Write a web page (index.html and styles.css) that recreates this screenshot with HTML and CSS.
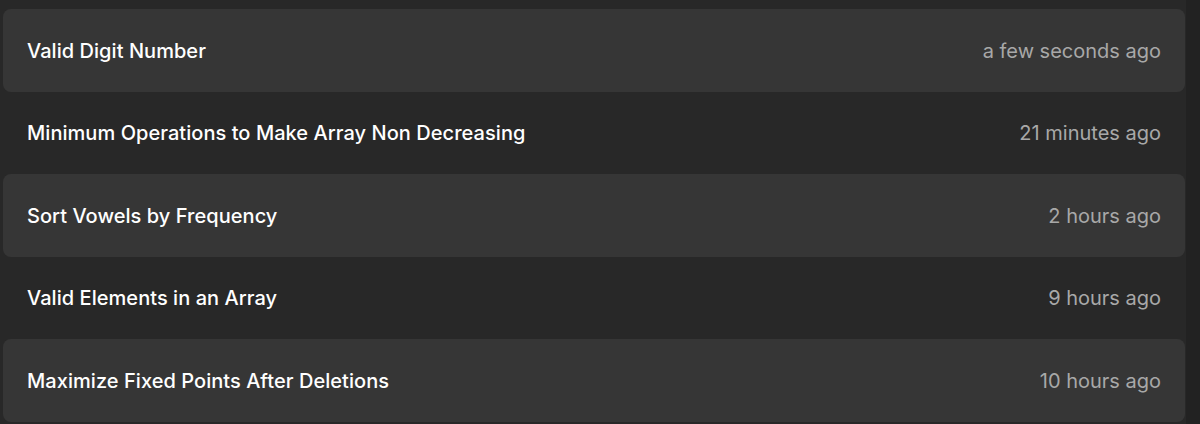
FILE: index.html
```html
<!DOCTYPE html>
<html lang="en">

<head>
    <meta charset="UTF-8">
    <meta name="viewport" content="width=device-width, initial-scale=1.0">
    <title>Recent</title>
    <link rel="stylesheet" href="styles.css">
</head>

<body>
    <div class="page">
        <ul class="recent-list">
            <li class="recent-item">
                <span class="title">Valid Digit Number</span>
                <span class="time">a few seconds ago</span>
            </li>
            <li class="recent-item">
                <span class="title">Minimum Operations to Make Array Non Decreasing</span>
                <span class="time">21 minutes ago</span>
            </li>
            <li class="recent-item">
                <span class="title">Sort Vowels by Frequency</span>
                <span class="time">2 hours ago</span>
            </li>
            <li class="recent-item">
                <span class="title">Valid Elements in an Array</span>
                <span class="time">9 hours ago</span>
            </li>
            <li class="recent-item">
                <span class="title">Maximize Fixed Points After Deletions</span>
                <span class="time">10 hours ago</span>
            </li>
        </ul>
        <div class="scroll-track"></div>
    </div>
</body>

</html>
```

FILE: styles.css
```css
body {
    margin: 0;
    padding: 0;
    background-color: #282828;
    font-family: Inter, "Noto Sans", sans-serif;
    height: 100vh;
    overflow: hidden;
}

.page {
    display: flex;
    height: 100%;
}

.recent-list {
    list-style: none;
    margin: 0;
    padding: 9px 1px 0 3px;
    flex: 1;
}

/* every other row gets the lighter card background */
.recent-item {
    display: flex;
    justify-content: space-between;
    align-items: center;
    height: 82.5px;
    padding: 1px 24px 0;
    box-sizing: border-box;
    border-radius: 8px;
}

.recent-item:nth-child(odd) {
    background-color: #363636;
}

.title {
    color: #ffffff;
    font-size: 20px;
    font-weight: 500;
    letter-spacing: 0.05px;
}

.time {
    color: #a8a8a8;
    font-size: 20px;
}

.scroll-track {
    width: 14px;
    background-color: #222222;
}
```
